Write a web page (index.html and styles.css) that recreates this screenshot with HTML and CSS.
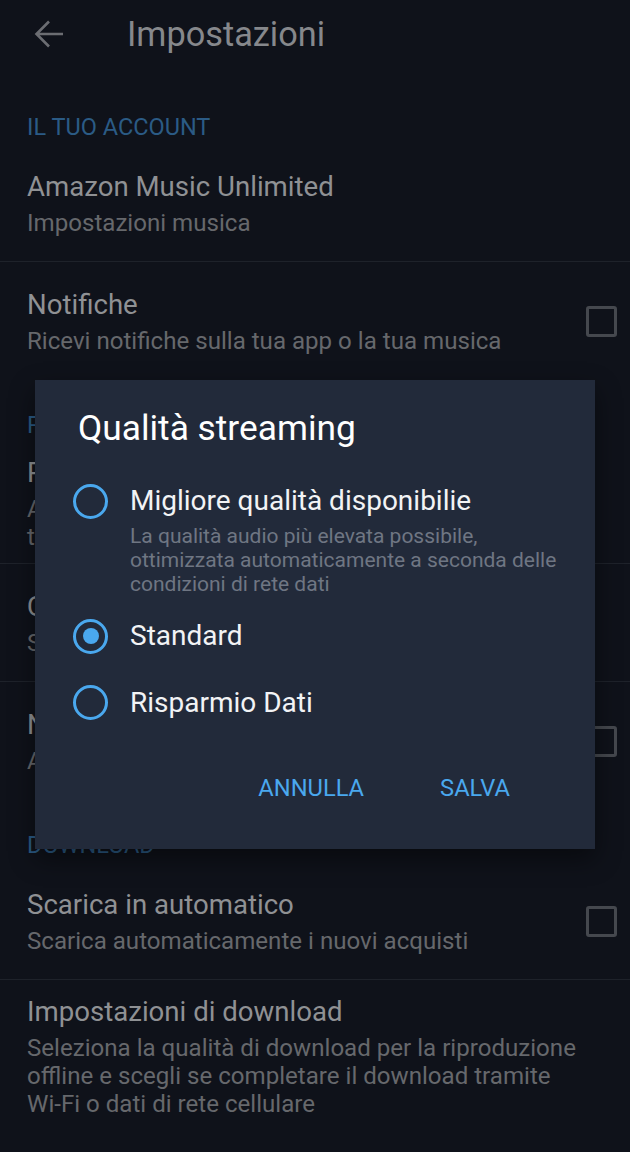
FILE: index.html
```html
<!DOCTYPE html>
<html lang="it">
<head>
<meta charset="utf-8">
<title>Impostazioni</title>
<link rel="stylesheet" href="styles.css">
</head>
<body>
<div class="screen">
  <header class="appbar">
    <svg class="back" width="30" height="30" viewBox="0 0 30 30" aria-hidden="true">
      <path d="M2.5 15H29M15 2.5L2.5 15L15 27.5" fill="none" stroke="currentColor" stroke-width="2.6" stroke-linecap="butt" stroke-linejoin="miter"/>
    </svg>
    <h1 class="appbar-title">Impostazioni</h1>
  </header>

  <section class="section">
    <h2 class="section-title first">IL TUO ACCOUNT</h2>
    <div class="row">
      <div class="row-text">
        <div class="row-title">Amazon Music Unlimited</div>
        <div class="row-sub">Impostazioni musica</div>
      </div>
    </div>
    <div class="row no-divider">
      <div class="row-text">
        <div class="row-title">Notifiche</div>
        <div class="row-sub">Ricevi notifiche sulla tua app o la tua musica</div>
      </div>
      <span class="checkbox"></span>
    </div>
  </section>

  <section class="section">
    <h2 class="section-title">PREFERENZE DI RIPRODUZIONE</h2>
    <div class="row compact">
      <div class="row-text">
        <div class="row-title">Preferenze audio</div>
        <div class="row-sub multi">Adatta la riproduzione alla tua connessione<br>tramite le impostazioni di qualità</div>
      </div>
    </div>
    <div class="row">
      <div class="row-text">
        <div class="row-title">Qualità streaming</div>
        <div class="row-sub">Standard</div>
      </div>
    </div>
    <div class="row no-divider">
      <div class="row-text">
        <div class="row-title">Normalizzazione del volume</div>
        <div class="row-sub">Applica lo stesso livello di volume</div>
      </div>
      <span class="checkbox"></span>
    </div>
  </section>

  <section class="section">
    <h2 class="section-title">DOWNLOAD</h2>
    <div class="row">
      <div class="row-text">
        <div class="row-title">Scarica in automatico</div>
        <div class="row-sub">Scarica automaticamente i nuovi acquisti</div>
      </div>
      <span class="checkbox"></span>
    </div>
    <div class="row compact-top wide-text no-divider">
      <div class="row-text">
        <div class="row-title">Impostazioni di download</div>
        <div class="row-sub multi">Seleziona la qualità di download per la riproduzione offline e scegli se completare il download tramite <span class="nowrap">Wi-Fi</span> o dati di rete cellulare</div>
      </div>
    </div>
  </section>

  <div class="dialog" role="dialog">
    <h3 class="dialog-title">Qualità streaming</h3>
    <div class="options">
      <div class="option">
        <span class="radio"></span>
        <div class="option-text">
          <div class="option-label">Migliore qualità disponibilie</div>
          <div class="option-desc">La qualità audio più elevata possibile, ottimizzata automaticamente a seconda delle condizioni di rete dati</div>
        </div>
      </div>
      <div class="option">
        <span class="radio checked"></span>
        <div class="option-text">
          <div class="option-label">Standard</div>
        </div>
      </div>
      <div class="option">
        <span class="radio"></span>
        <div class="option-text">
          <div class="option-label">Risparmio Dati</div>
        </div>
      </div>
    </div>
    <div class="actions">
      <button class="btn">ANNULLA</button>
      <button class="btn">SALVA</button>
    </div>
  </div>
</div>
</body>
</html>
```

FILE: styles.css
```css
* { box-sizing: border-box; }

html, body {
  margin: 0;
  padding: 0;
  background: #0f121a;
}

body {
  font-family: Roboto, "Noto Sans", sans-serif;
  width: 630px;
  height: 1152px;
  overflow: hidden;
}

.screen {
  position: relative;
  width: 630px;
  height: 1152px;
}

.appbar {
  display: flex;
  align-items: center;
  height: 82px;
  padding: 16px 0 30px 34px;
  color: #6b6d72;
}

.back { flex: none; }

.appbar-title {
  margin: 0 0 0 63px;
  font-size: 34.3px;
  font-weight: 400;
  line-height: 36px;
  color: #86888c;
}

.section-title {
  margin: 0;
  padding: 31px 27px 0;
  font-size: 23.5px;
  line-height: 30px;
  font-weight: 400;
  color: #2b5b85;
  white-space: nowrap;
}

.section-title.first { padding-top: 30px; }

.row {
  display: flex;
  align-items: center;
  padding: 25px 13px 23px 27px;
  border-bottom: 1px solid #1e222a;
}

.section-title + .row { padding-top: 27px; }
.row.no-divider { border-bottom: none; }
.row.compact { padding-top: 15px; padding-bottom: 12px; }
.row.compact-top { padding-top: 14px; }
.row.wide-text { padding-right: 36px; }

.row-text { flex: 1; min-width: 0; }

.row-title {
  font-size: 27.6px;
  line-height: 36px;
  color: #8f9194;
  white-space: nowrap;
}

.row-sub {
  margin-top: 4px;
  font-size: 24.1px;
  line-height: 29px;
  color: #66686c;
}

.row-sub.multi { line-height: 28px; }

.nowrap { white-space: nowrap; }

.checkbox {
  flex: none;
  width: 31px;
  height: 31px;
  border: 3px solid #45484e;
  border-radius: 3px;
  margin-left: 16px;
}

/* dialog */
.dialog {
  position: absolute;
  top: 380px;
  left: 35px;
  width: 560px;
  height: 469px;
  background: #222a3a;
  padding: 28px 0 0 0;
  box-shadow: 0 10px 24px rgba(0, 0, 0, 0.45);
  display: flex;
  flex-direction: column;
}

.dialog-title {
  margin: 0;
  padding-left: 43px;
  font-size: 35.3px;
  line-height: 40px;
  font-weight: 400;
  color: #ffffff;
}

.options {
  margin-top: 20px;
  display: flex;
  flex-direction: column;
}

.option {
  display: flex;
  align-items: flex-start;
  padding: 16px 30px 16px 38px;
}

.option + .option { min-height: 66px; }
.option:first-child { padding-bottom: 7px; }

.radio {
  flex: none;
  width: 35px;
  height: 35px;
  margin-top: -0.5px;
  border: 3.5px solid #4aa8ee;
  border-radius: 50%;
  display: flex;
  align-items: center;
  justify-content: center;
}

.radio.checked::after {
  content: "";
  width: 16px;
  height: 16px;
  border-radius: 50%;
  background: #4aa8ee;
}

.option-text {
  margin-left: 22px;
  flex: 1;
}

.option-label {
  font-size: 28px;
  line-height: 34px;
  color: #f2f3f5;
}

.option-desc {
  margin-top: 6px;
  font-size: 21px;
  line-height: 24px;
  color: #6f7683;
}

.actions {
  display: flex;
  justify-content: flex-end;
  gap: 44px;
  margin-top: 28px;
  padding-right: 69px;
}

.btn {
  font-family: inherit;
  background: none;
  border: none;
  padding: 0 16px;
  height: 48px;
  font-size: 23.7px;
  color: #4aa8ee;
  cursor: pointer;
}
```
